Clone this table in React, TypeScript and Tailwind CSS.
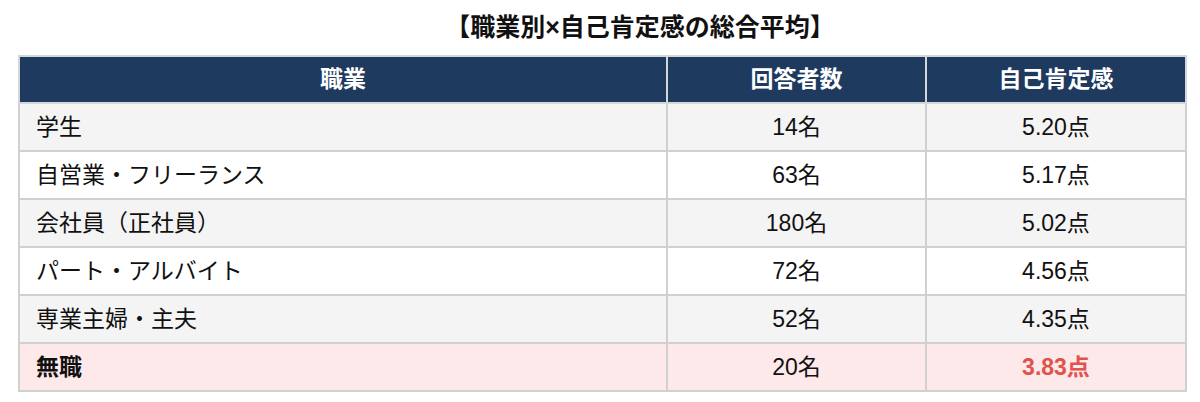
import React from "react";

const rows = [
  { name: "学生", n: "14名", s: "5.20点", bg: "bg-[#f4f4f4]" },
  { name: "自営業・フリーランス", n: "63名", s: "5.17点", bg: "bg-white" },
  { name: "会社員（正社員）", n: "180名", s: "5.02点", bg: "bg-[#f4f4f4]" },
  { name: "パート・アルバイト", n: "72名", s: "4.56点", bg: "bg-white" },
  { name: "専業主婦・主夫", n: "52名", s: "4.35点", bg: "bg-[#f4f4f4]" },
];

export default function App() {
  return (
    <div
      className="w-[1200px] h-[402px] bg-white text-[#111]"
      style={{ fontFamily: '"Liberation Sans", "Noto Sans CJK JP", sans-serif' }}
    >
      <div className="h-[55px] flex items-center justify-center pl-[80px]">
        <h1 className="text-[25px] font-bold leading-none text-[#111]">
          【職業別×自己肯定感の総合平均】
        </h1>
      </div>
      <div className="pl-[18px]">
        <table className="w-[1167px] border-collapse table-fixed">
          <colgroup>
            <col className="w-[648px]" />
            <col className="w-[259px]" />
            <col className="w-[260px]" />
          </colgroup>
          <thead>
            <tr className="h-[47px] bg-[#1f3a5f] text-white text-[23px] font-bold">
              <th className="border-2 border-[#d3d7dc] text-center font-bold">職業</th>
              <th className="border-2 border-[#d3d7dc] text-center font-bold">回答者数</th>
              <th className="border-2 border-[#d3d7dc] text-center font-bold">自己肯定感</th>
            </tr>
          </thead>
          <tbody className="text-[23px]">
            {rows.map((r) => (
              <tr key={r.name} className={`h-[48px] ${r.bg}`}>
                <td className="border-2 border-[#d0d0d0] pl-[16px] text-left">{r.name}</td>
                <td className="border-2 border-[#d0d0d0] text-center">{r.n}</td>
                <td className="border-2 border-[#d0d0d0] text-center">{r.s}</td>
              </tr>
            ))}
            <tr className="h-[48px] bg-[#fde8ea]">
              <td className="border-2 border-[#d0d0d0] pl-[16px] text-left font-bold">無職</td>
              <td className="border-2 border-[#d0d0d0] text-center">20名</td>
              <td className="border-2 border-[#d0d0d0] text-center font-bold text-[#e0524c]">3.83点</td>
            </tr>
          </tbody>
        </table>
      </div>
    </div>
  );
}
